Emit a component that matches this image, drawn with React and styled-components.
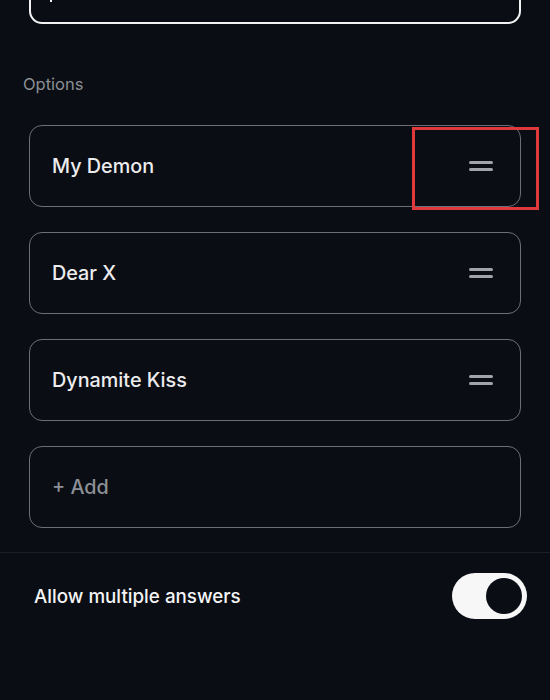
import styled, { createGlobalStyle } from 'styled-components';

const GlobalStyle = createGlobalStyle`
  html, body {
    margin: 0;
    padding: 0;
    background: #0a0d13;
  }
  body {
    font-family: Inter, "Liberation Sans", Arial, sans-serif;
    overflow: hidden;
  }
`;

const options = ['My Demon', 'Dear X', 'Dynamite Kiss'];

export default function App() {
  return (
    <Page>
      <GlobalStyle />
      <Section>
        <QuestionBox>
          <Caret />
        </QuestionBox>
        <Label>Options</Label>
        <OptionList>
          {options.map((name, i) => (
            <OptionCard key={name}>
              <OptionText>{name}</OptionText>
              <Handle aria-hidden="true">
                <span />
                <span />
              </Handle>
              {i === 0 && <Highlight />}
            </OptionCard>
          ))}
          <OptionCard>
            <OptionText $muted>+ Add</OptionText>
          </OptionCard>
        </OptionList>
      </Section>
      <SettingRow>
        <SettingText>Allow multiple answers</SettingText>
        <Toggle $on>
          <Knob />
        </Toggle>
      </SettingRow>
    </Page>
  );
}

const Page = styled.div`
  width: 550px;
  height: 700px;
  background: #0a0d13;
  color: #ececee;
  overflow: hidden;
`;

const Section = styled.div`
  padding: 0 29px 24px 29px;
  border-bottom: 1px solid #1a1e25;
`;

const QuestionBox = styled.div`
  margin-top: -56px;
  height: 76px;
  border: 2.5px solid #f2f2f4;
  border-radius: 13px;
  position: relative;
`;

const Caret = styled.div`
  position: absolute;
  left: 19px;
  top: 36px;
  width: 2px;
  height: 20px;
  background: #f2f2f4;
`;

const Label = styled.div`
  margin: 48px 0 0 -6px;
  height: 24px;
  line-height: 24px;
  font-size: 16.5px;
  color: #8c8f95;
`;

const OptionList = styled.div`
  margin-top: 29px;
  display: flex;
  flex-direction: column;
  gap: 25px;
`;

const OptionCard = styled.div`
  position: relative;
  height: 82px;
  box-sizing: border-box;
  border: 1.5px solid #6c6f75;
  border-radius: 13px;
  display: flex;
  align-items: center;
  justify-content: space-between;
  padding: 0 27px 0 22px;
`;

const OptionText = styled.span`
  font-size: 19.8px;
  font-weight: 500;
  color: ${(props) => (props.$muted ? '#8d9096' : '#ececee')};
`;

const Handle = styled.div`
  display: flex;
  flex-direction: column;
  gap: 4px;

  span {
    display: block;
    width: 24px;
    height: 3px;
    border-radius: 2px;
    background: #a2a4a9;
  }
`;

const Highlight = styled.div`
  position: absolute;
  left: 382px;
  top: 1px;
  width: 121px;
  height: 77px;
  border: 3px solid #e0393c;
  pointer-events: none;
`;

const SettingRow = styled.div`
  display: flex;
  align-items: center;
  justify-content: space-between;
  padding: 20px 23px 0 34px;
`;

const SettingText = styled.span`
  font-size: 18.8px;
  font-weight: 500;
  color: #f4f4f6;
`;

const Toggle = styled.div`
  width: 75px;
  height: 46px;
  border-radius: 23px;
  background: ${(props) => (props.$on ? '#f7f7f8' : '#3a3d44')};
  display: flex;
  align-items: center;
  justify-content: ${(props) => (props.$on ? 'flex-end' : 'flex-start')};
  padding: 0 5px;
  box-sizing: border-box;
`;

const Knob = styled.div`
  width: 36px;
  height: 36px;
  border-radius: 50%;
  background: #0a0d13;
`;
